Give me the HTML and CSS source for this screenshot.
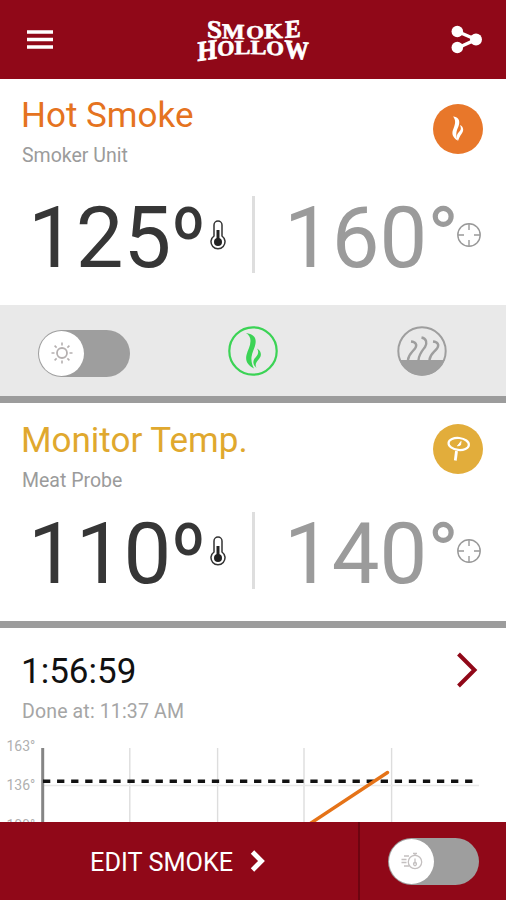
FILE: index.html
```html
<!DOCTYPE html>
<html lang="en">

<head>
    <meta charset="UTF-8">
    <meta name="viewport" content="width=device-width, initial-scale=1.0">
    <title>Smoke Hollow</title>
    <link rel="stylesheet" href="styles.css">
</head>

<body>
    <div class="app">
        <header class="header">
            <svg class="menu-icon" width="26" height="20" viewBox="0 0 26 20">
                <path d="M0 2h26M0 9.5h26M0 17h26" stroke="#fff" stroke-width="3.6" />
            </svg>
            <svg class="logo" width="140" height="74" viewBox="-12 -14 140 74">
                <text transform="matrix(1.35 0.14 0 1.25 10 20)">S</text>
                <text transform="matrix(1.2 0.04 0 1.06 25 21.3)">M</text>
                <text transform="matrix(1.14 0 0 0.95 49.2 21.5)">O</text>
                <text transform="matrix(1.2 -0.04 0 1.06 67.3 21.5)">K</text>
                <text transform="matrix(1.18 -0.1 0 1.25 88 21)">E</text>
                <text transform="matrix(1.25 -0.18 0 1.4 0.5 44)">H</text>
                <text transform="matrix(1.1 -0.08 0 1.08 20.3 39)">O</text>
                <text transform="matrix(1.2 -0.02 0 1 37.5 37.3)">L</text>
                <text transform="matrix(1.2 0.02 0 1 53.5 37)">L</text>
                <text transform="matrix(1.14 0.06 0 1.02 69.2 37.6)">O</text>
                <text transform="matrix(1.22 0.12 0 1.3 87.5 40.5)">W</text>
            </svg>
            <svg class="share-icon" width="32" height="30" viewBox="0 0 32 30">
                <path d="M6.5 6.5L25 14.5L6.5 23" fill="none" stroke="#fff" stroke-width="3.4" />
                <circle cx="6.3" cy="6.5" r="5.8" fill="#fff" />
                <circle cx="6.3" cy="22.5" r="5.8" fill="#fff" />
                <circle cx="25" cy="14.5" r="6" fill="#fff" />
            </svg>
        </header>

        <section class="card card-smoke">
            <div class="card-top">
                <div class="card-names">
                    <h2 class="title orange">Hot Smoke</h2>
                    <p class="subtitle">Smoker Unit</p>
                </div>
                <div class="badge badge-orange">
                    <svg width="50" height="50" viewBox="0 0 50 50">
                        <path d="M20 12.5C25 13 27 16 26 20.5C25 25 21.5 28 24.5 36.5C19 33 18.5 29 20.5 24.5C22.5 19.5 23 16 20 12.5Z" fill="#fff" />
                        <path d="M27 21C31 23 31 27 28.5 30C27 32 26 34 25 37C22.5 33 24 30 26 28C28.5 25.5 28 24 27 21Z" fill="#fff" />
                    </svg>
                </div>
            </div>
            <div class="temps">
                <div class="temp current">
                    <span class="digits">125</span><span class="ring">o</span>
                    <svg class="thermo" width="16" height="30" viewBox="0 0 16 30">
                        <path d="M4 16V5a4 4 0 0 1 8 0v11a7 7 0 1 1-8 0z" fill="#fff" stroke="#333" stroke-width="1.5" />
                        <path d="M8 10v12" stroke="#222" stroke-width="3" />
                        <circle cx="8" cy="22" r="4" fill="#222" />
                    </svg>
                </div>
                <div class="temp target">
                    <span class="digits">160°</span>
                    <svg class="aim" width="26" height="26" viewBox="0 0 26 26">
                        <circle cx="13" cy="13" r="11.2" />
                        <path d="M13 2v6M13 18v6M2 13h6M18 13h6" />
                    </svg>
                </div>
            </div>
        </section>

        <section class="controls">
            <div class="toggle">
                <div class="knob">
                    <svg width="24" height="24" viewBox="0 0 24 24">
                        <circle cx="12" cy="12" r="5" fill="none" stroke="#b5b0b0" stroke-width="1.8" />
                        <path d="M12 1.5v3M12 19.5v3M1.5 12h3M19.5 12h3M4.6 4.6l2 2M17.4 17.4l2 2M4.6 19.4l2-2M17.4 6.6l2-2" stroke="#b5b0b0" stroke-width="1.6" />
                    </svg>
                </div>
            </div>
            <svg class="mode" width="50" height="50" viewBox="0 0 50 50">
                <circle cx="25" cy="25" r="23.7" fill="none" stroke="#3bd355" stroke-width="2.2" />
                <path d="M18 7C25 8 28.5 11 27.5 17.5C27 22 24 26 23.5 31C23 36 24.5 39.5 26 42.5C20 39.5 17 35 18.5 29C19.5 24.5 22.5 20 22.5 15C22.5 11.5 21 9 18 7Z" fill="#3bd355" />
                <path d="M29 22.5C33.5 25 34 29.5 31 33C28.5 36 26.5 38 28.5 42C24.5 38.5 24.5 34.5 27.5 31.5C30.5 28.5 31 25.5 29 22.5Z" fill="#3bd355" />
            </svg>
            <svg class="mode" width="50" height="50" viewBox="0 0 50 50">
                <circle cx="25" cy="25" r="23.7" fill="none" stroke="#9e9e9e" stroke-width="2" />
                <path d="M2.5 34h45A24 24 0 0 1 2.5 34z" fill="#9e9e9e" />
                <path d="M14 15.5C19 16 20.5 19 18 22.5C15 26.5 11.5 28 11 34M24.5 11.5C29.5 12.5 30.5 17 28 21C25 25 22 28 21.5 34M36 15.5C41 16 42.5 19 40 22.5C37 26.5 33 28 32.5 34" fill="none" stroke="#9e9e9e" stroke-width="2.4" />
            </svg>
        </section>

        <section class="card card-probe">
            <div class="card-top">
                <div class="card-names">
                    <h2 class="title yellow">Monitor Temp.</h2>
                    <p class="subtitle">Meat Probe</p>
                </div>
                <div class="badge badge-yellow">
                    <svg width="50" height="50" viewBox="0 0 50 50">
                        <ellipse cx="25.7" cy="20" rx="10.2" ry="6" transform="rotate(6 26 20)" fill="none" stroke="#fff" stroke-width="2.2" />
                        <path d="M24.5 22L28 17.5L27.5 21Z" fill="#fff" stroke="#fff" stroke-width="1" />
                        <path d="M23.5 27L22.3 36.5" stroke="#fff" stroke-width="2.8" />
                    </svg>
                </div>
            </div>
            <div class="temps">
                <div class="temp current">
                    <span class="digits">110</span><span class="ring">o</span>
                    <svg class="thermo" width="16" height="30" viewBox="0 0 16 30">
                        <path d="M4 16V5a4 4 0 0 1 8 0v11a7 7 0 1 1-8 0z" fill="#fff" stroke="#333" stroke-width="1.5" />
                        <path d="M8 10v12" stroke="#222" stroke-width="3" />
                        <circle cx="8" cy="22" r="4" fill="#222" />
                    </svg>
                </div>
                <div class="temp target">
                    <span class="digits">140°</span>
                    <svg class="aim" width="26" height="26" viewBox="0 0 26 26">
                        <circle cx="13" cy="13" r="11.2" />
                        <path d="M13 2v6M13 18v6M2 13h6M18 13h6" />
                    </svg>
                </div>
            </div>
        </section>

        <section class="timer">
            <div class="timer-top">
                <div>
                    <div class="time">1:56:59</div>
                    <p class="done">Done at: 11:37 AM</p>
                </div>
                <svg class="arrow" width="22" height="38" viewBox="0 0 22 38">
                    <path d="M2.5 3L18.5 19L2.5 35" fill="none" stroke="#900818" stroke-width="4" />
                </svg>
            </div>
            <!-- temperature history -->
            <svg class="chart" width="506" height="90" viewBox="0 0 506 90">
                <path d="M129.8 16v74M217.6 16v74M304 16v74M391.6 16v74" stroke="#ddd" stroke-width="1.4" />
                <path d="M44 53.5h435" stroke="#e8e8e8" stroke-width="1.5" />
                <path d="M42.7 16v74" stroke="#858585" stroke-width="3" />
                <path d="M43 49.3h430" stroke="#111" stroke-width="3.4" stroke-dasharray="7.3 6.77" />
                <path d="M308 93L387.5 40.5" stroke="#e57318" stroke-width="3.4" stroke-linecap="round" />
                <text x="6.5" y="18.7">163°</text>
                <text x="6.5" y="58.3">136°</text>
                <text x="6.5" y="98">109°</text>
            </svg>
        </section>

        <footer class="footer">
            <div class="edit">
                <span>EDIT SMOKE</span>
                <svg width="16" height="24" viewBox="0 0 16 24">
                    <path d="M2.5 3L11.5 12L2.5 21" fill="none" stroke="#fff" stroke-width="4.8" />
                </svg>
            </div>
            <div class="timer-switch">
                <div class="toggle">
                    <div class="knob">
                        <svg class="stopwatch" width="24" height="20" viewBox="0 0 24 20">
                            <circle cx="15" cy="11" r="6.7" />
                            <path d="M13 2.5h4M15 2.5v2M15 7.5v5M15 14.5v0.8M4 5h5M1.5 8.5h5M1.5 11.5h5M4 15h5" />
                            <circle cx="15" cy="13" r="1.5" />
                        </svg>
                    </div>
                </div>
            </div>
        </footer>
    </div>
</body>

</html>
```
FILE: styles.css
```css
* {
    box-sizing: border-box;
}

body {
    margin: 0;
    font-family: Roboto, sans-serif;
    background-color: #fff;
    overflow: hidden;
}

h2, p {
    margin: 0;
    font-weight: 400;
}

svg {
    display: block;
    flex-shrink: 0;
}

.app {
    display: flex;
    flex-direction: column;
    width: 506px;
    height: 900px;
}

.header {
    display: flex;
    justify-content: space-between;
    align-items: center;
    height: 79px;
    padding: 0 23px 0 27px;
    background-color: #900818;
}

.logo {
    margin-left: 6px;
}

.logo text {
    font-family: "Liberation Serif", serif;
    font-weight: 700;
    font-size: 20px;
    fill: #fff;
    stroke: #fff;
    stroke-width: 0.6;
}

.card-smoke {
    height: 226px;
}

.card-probe {
    height: 218px;
}

.card-top {
    display: flex;
    justify-content: space-between;
    padding: 16px 23px 0 21px;
}

.card-smoke .card-top {
    height: 117px;
}

.card-probe .card-top {
    height: 109px;
    padding-top: 17px;
}

.title {
    font-size: 35px;
    line-height: 41px;
}

.orange {
    color: #e57320;
}

.yellow {
    color: #e0a82e;
}

.subtitle, .done {
    margin-top: 8px;
    padding-left: 1px;
    font-size: 19.5px;
    line-height: 23px;
    color: #9b9b9b;
}

.badge {
    width: 50px;
    height: 50px;
    border-radius: 50%;
}

.badge-orange {
    margin-top: 9px;
    background-color: #e8772a;
}

.badge-yellow {
    margin-top: 4px;
    background-color: #e2ad3b;
}

.temps {
    display: flex;
    height: 77px;
}

.temp {
    display: flex;
    align-items: center;
    width: 253px;
    font-size: 85px;
    line-height: 77px;
}

.digits {
    padding-top: 8px;
}

.current {
    width: 252px;
    padding-left: 28px;
    color: #363636;
}

.target {
    border-left: 3px solid #dedede;
    padding-left: 29px;
    color: #9b9b9b;
}

.ring {
    margin: -33px 0 0 1px;
    font-size: 58px;
    font-weight: 500;
    transform: scale(0.92, 1.06);
}

.thermo {
    margin-left: 5px;
}

.aim {
    margin-left: -3px;
    fill: none;
    stroke: #999;
    stroke-width: 1.4;
}

.controls {
    display: grid;
    grid-template-columns: repeat(3, 1fr);
    justify-items: center;
    align-items: center;
    height: 98px;
    background-color: #e9e9e9;
    border-bottom: 7px solid #9c9c9c;
}

.toggle {
    width: 92px;
    height: 47px;
    padding: 1px;
    border-radius: 24px;
    background-color: #9e9e9e;
}

.controls .toggle {
    margin-top: 5px;
}

.knob {
    display: flex;
    justify-content: center;
    align-items: center;
    width: 45px;
    height: 45px;
    border-radius: 50%;
    background-color: #fff;
}

.timer {
    height: 201px;
    border-top: 7px solid #9c9c9c;
    overflow: hidden;
}

.timer-top {
    display: flex;
    justify-content: space-between;
    height: 104px;
    padding: 23px 28px 0 21px;
}

.time {
    font-size: 35px;
    line-height: 41px;
    color: #111;
}

.timer .done {
    letter-spacing: 0.15px;
    color: #a5a5a5;
}

.chart text {
    font-size: 14px;
    fill: #b0b0b0;
}

.footer {
    display: flex;
    height: 78px;
    background-color: #900818;
}

.edit {
    display: flex;
    align-items: center;
    gap: 17px;
    width: 360px;
    padding-left: 90px;
    border-right: 2px solid #6d0410;
    font-size: 25.3px;
    color: #fff;
}

.edit span {
    padding-top: 2px;
}

.timer-switch {
    display: flex;
    align-items: center;
    padding-left: 28px;
}

.timer-switch .toggle {
    width: 91px;
}

.stopwatch {
    fill: none;
    stroke: #c4c0c0;
    stroke-width: 1.3;
}
```
